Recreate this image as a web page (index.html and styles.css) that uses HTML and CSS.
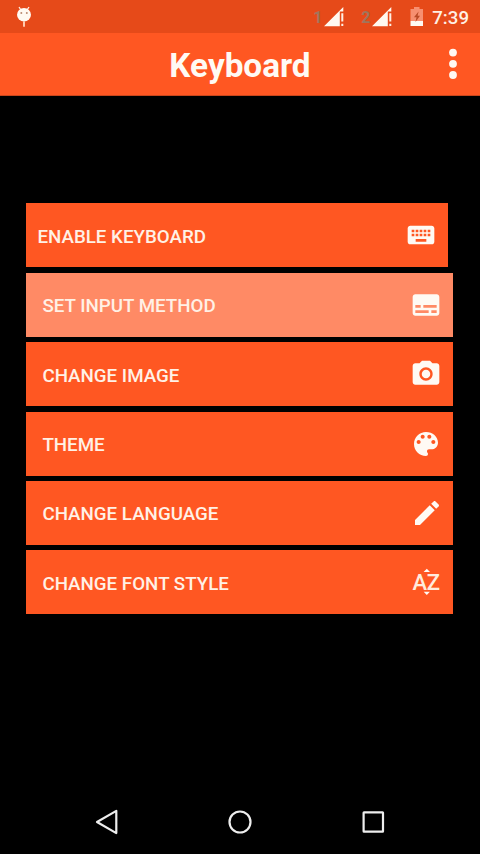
FILE: index.html
```html
<!DOCTYPE html>
<html lang="en">
<head>
<meta charset="utf-8">
<title>Keyboard</title>
<link rel="stylesheet" href="styles.css">
</head>
<body>
<div class="screen">
  <header class="status">
    <svg class="debug" width="16" height="22" viewBox="0 0 16 22">
      <path d="M3 1l2 3M13 1l-2 3" stroke="#fff0e4" stroke-width="1.3"/>
      <ellipse cx="8" cy="8.7" rx="7" ry="6.8" fill="#fffaf2"/>
      <rect x="7" y="15" width="2" height="6" rx="1" fill="#ffc9ad"/>
      <circle cx="5.3" cy="7" r="1" fill="#b98b72"/><circle cx="10.8" cy="7" r="1" fill="#b98b72"/>
    </svg>
    <div class="indicators">
      <span class="sim">1</span>
      <svg class="signal" width="20" height="20" viewBox="0 0 20 20"><path d="M0 19.3L19.3 0v4.500h-3.500v14.800z" fill="#fff8ef"/><path d="M17.300 6.200h2v8.300h-2zM17.300 16.700h2v2.400h-2z" fill="#fff0e4"/></svg>
      <span class="sim">2</span>
      <svg class="signal" width="20" height="20" viewBox="0 0 20 20"><path d="M0 19.3L19.3 0v4.500h-3.500v14.800z" fill="#fff8ef"/><path d="M17.300 6.200h2v8.300h-2zM17.300 16.700h2v2.400h-2z" fill="#fff0e4"/></svg>
      <svg class="battery" width="14" height="20" viewBox="0 0 14 20"><path d="M4 0h5.500v2H13v12H.5V2H4z" fill="#f78f70"/><path d="M.5 14H13v5H.5z" fill="#fffaf2"/><path d="M8.600 4.500L4 10.200h2.500l-1 4.800 4.500-6.300H7.600z" fill="#b94a27"/></svg>
      <span class="clock">7:39</span>
    </div>
  </header>
  <div class="appbar">
    <h1>Keyboard</h1>
    <svg class="more" width="8" height="32" viewBox="0 0 8 32" fill="#fff8f2"><circle cx="4" cy="4.600" r="3.900"/><circle cx="4" cy="15.800" r="3.900"/><circle cx="4" cy="27" r="3.900"/></svg>
  </div>
  <main class="menu">
    <div class="item first"><span>ENABLE KEYBOARD</span>
      <svg class="icon" viewBox="0 0 24 24"><path d="M20 5H4c-1.100 0-1.990.9-1.990 2L2 17c0 1.100.9 2 2 2h16c1.100 0 2-.9 2-2V7c0-1.100-.9-2-2-2zm-9 3h2v2h-2V8zm0 3h2v2h-2v-2zM8 8h2v2H8V8zm0 3h2v2H8v-2zm-1 2H5v-2h2v2zm0-3H5V8h2v2zm9 7H8v-2h8v2zm0-4h-2v-2h2v2zm0-3h-2V8h2v2zm3 3h-2v-2h2v2zm0-3h-2V8h2v2z"/></svg></div>
    <div class="item pressed"><span>SET INPUT METHOD</span>
      <svg class="icon" viewBox="0 0 24 24"><path d="M20 4H4c-1.100 0-2 .9-2 2v12c0 1.100.9 2 2 2h16c1.100 0 2-.9 2-2V6c0-1.100-.9-2-2-2zM4 12h4v2H4v-2zm10 6H4v-2h10v2zm6 0h-4v-2h4v2zm0-4H10v-2h10v2z"/></svg></div>
    <div class="item"><span>CHANGE IMAGE</span>
      <svg class="icon" viewBox="0 0 24 24"><circle cx="12" cy="12" r="3.200"/><path d="M9 2L7.170 4H4c-1.100 0-2 .9-2 2v12c0 1.100.9 2 2 2h16c1.100 0 2-.9 2-2V6c0-1.100-.9-2-2-2h-3.170L15 2H9zm3 15c-2.760 0-5-2.240-5-5s2.240-5 5-5 5 2.240 5 5-2.240 5-5 5z"/></svg></div>
    <div class="item"><span>THEME</span>
      <svg class="icon" viewBox="0 0 24 24"><path d="M12 3c-4.970 0-9 4.030-9 9s4.030 9 9 9c.83 0 1.500-.67 1.500-1.500 0-.39-.15-.74-.39-1.010-.23-.26-.38-.61-.38-.99 0-.83.67-1.500 1.500-1.500H16c2.760 0 5-2.240 5-5 0-4.420-4.030-8-9-8zm-5.500 9c-.83 0-1.500-.67-1.500-1.500S5.670 9 6.500 9 8 9.670 8 10.500 7.330 12 6.500 12zm3-4C8.670 8 8 7.330 8 6.500S8.670 5 9.500 5s1.500.67 1.500 1.500S10.330 8 9.500 8zm5 0c-.83 0-1.500-.67-1.500-1.500S13.670 5 14.500 5s1.500.67 1.500 1.500S15.330 8 14.500 8zm3 4c-.83 0-1.500-.67-1.500-1.500S16.670 9 17.500 9s1.500.67 1.500 1.500-.67 1.500-1.500 1.500z"/></svg></div>
    <div class="item"><span>CHANGE LANGUAGE</span>
      <svg class="icon pencil" viewBox="0 0 24 24"><path d="M3 17.250V21h3.750L17.810 9.940l-3.750-3.750L3 17.250zM20.710 7.040c.39-.39.39-1.020 0-1.410l-2.340-2.340c-.39-.39-1.020-.39-1.410 0l-1.830 1.830 3.750 3.750 1.830-1.830z"/></svg></div>
    <div class="item"><span>CHANGE FONT STYLE</span>
      <svg class="icon" viewBox="0 0 32 32"><text class="az" x="2.400" y="23.700">A</text><text class="az" x="16.700" y="23.700">Z</text><path d="M13.600 6L16.800 2.800 20 6zM13.700 25.800h6.200l-3.100 3.100z"/></svg></div>
  </main>
  <nav class="nav">
    <svg width="26" height="26" viewBox="0 0 26 26"><path d="M3 13L22.300 1.900v22.200z"/></svg>
    <svg width="26" height="26" viewBox="0 0 26 26"><circle cx="13" cy="13" r="10.500"/></svg>
    <svg width="26" height="26" viewBox="0 0 26 26"><rect x="3.600" y="3.300" width="19.400" height="19.400" rx=".4"/></svg>
  </nav>
</div>
</body>
</html>
```

FILE: styles.css
```css
* { box-sizing: border-box; }
body { margin: 0; background: #000; font-family: Roboto, sans-serif; color: #fff4ec; }
.screen { width: 480px; height: 854px; display: flex; flex-direction: column; background: #000; overflow: hidden; }
.status { height: 33px; background: #e64a19; display: flex; justify-content: space-between; padding: 0 11px 0 16px; }
.debug { margin-top: 6px; }
.indicators { display: flex; align-items: flex-start; }
.sim { width: 11px; margin-top: 8px; font-size: 16px; line-height: 19px; font-weight: 700; color: #a0755c; }
.signal { margin: 7px 17px 0 0; }
.battery { margin: 7px 8px 0 1px; }
.clock { margin-top: 7px; font-size: 18.670px; line-height: 22px; font-weight: 500; color: #fff0e4; }
.appbar { height: 63px; background: #ff5722; display: grid; grid-template-columns: 1fr auto 1fr; align-items: center; border-bottom: 1px solid #c9461c; }
.appbar h1 { grid-column: 2; margin: 3px 0 0; font-size: 33.300px; line-height: 40px; font-weight: 700; color: #fffaf4; }
.more { justify-self: end; margin-right: 23px; }
.menu { margin: 107.400px 26.600px 0 26.400px; display: flex; flex-direction: column; gap: 5.400px; }
.item { height: 64px; padding: 0 11px 0 16px; background: #ff5722; display: flex; align-items: center; justify-content: space-between; font-size: 18.750px; font-weight: 500; line-height: 22px; color: #fff1e6; }
.item span { margin-top: 3px; }
.first { width: 421.600px; padding-left: 11px; }
.pressed { background: #ff8a65; }
.icon { width: 32px; height: 32px; fill: #fffaf4; }
.pencil { margin-right: -1px; }
.az { font-family: Roboto, sans-serif; font-size: 22px; font-weight: 500; fill: #ffebdd; }
.nav { margin-top: auto; height: 64px; padding: 0 94px; display: flex; justify-content: space-between; align-items: center; }
.nav svg { fill: none; stroke: #eee; stroke-width: 2.200; stroke-linejoin: round; }
```
